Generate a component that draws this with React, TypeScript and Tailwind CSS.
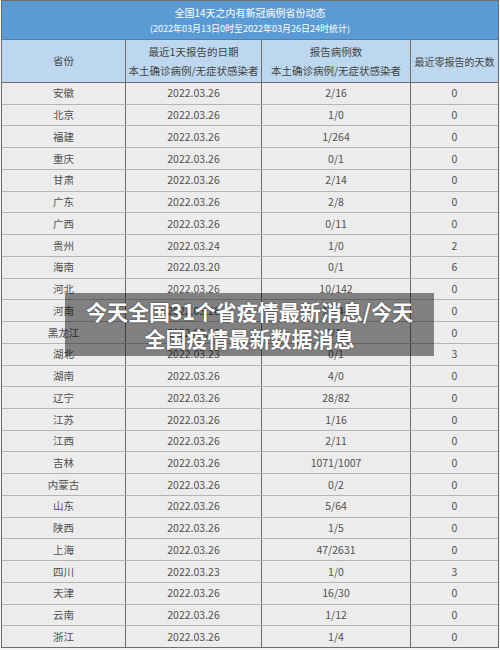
import React from "react";

const rows: [string, string, string, string][] = [
  ["安徽", "2022.03.26", "2/16", "0"],
  ["北京", "2022.03.26", "1/0", "0"],
  ["福建", "2022.03.26", "1/264", "0"],
  ["重庆", "2022.03.26", "0/1", "0"],
  ["甘肃", "2022.03.26", "2/14", "0"],
  ["广东", "2022.03.26", "2/8", "0"],
  ["广西", "2022.03.26", "0/11", "0"],
  ["贵州", "2022.03.24", "1/0", "2"],
  ["海南", "2022.03.20", "0/1", "6"],
  ["河北", "2022.03.26", "10/142", "0"],
  ["河南", "2022.03.26", "14/44", "0"],
  ["黑龙江", "2022.03.26", "0/13", "0"],
  ["湖北", "2022.03.23", "0/1", "3"],
  ["湖南", "2022.03.26", "4/0", "0"],
  ["辽宁", "2022.03.26", "28/82", "0"],
  ["江苏", "2022.03.26", "1/16", "0"],
  ["江西", "2022.03.26", "2/11", "0"],
  ["吉林", "2022.03.26", "1071/1007", "0"],
  ["内蒙古", "2022.03.26", "0/2", "0"],
  ["山东", "2022.03.26", "5/64", "0"],
  ["陕西", "2022.03.26", "1/5", "0"],
  ["上海", "2022.03.26", "47/2631", "0"],
  ["四川", "2022.03.23", "1/0", "3"],
  ["天津", "2022.03.26", "16/30", "0"],
  ["云南", "2022.03.26", "1/12", "0"],
  ["浙江", "2022.03.26", "1/4", "0"],
];

const font = { fontFamily: '"Noto Sans CJK SC", "Noto Sans", sans-serif' };

export default function App() {
  return (
    <div
      className="relative w-[500px] h-[650px] bg-[#f4f4f4] overflow-hidden text-[#505050]"
      style={font}
    >
      <div className="absolute inset-0 flex flex-col px-[1px] pb-[2px]">
        <div className="border border-[#6f6f6f] flex flex-col h-full bg-[#ececec]">
          {/* Banner */}
          <div className="h-[39px] bg-[#5b9bd5] text-white flex flex-col items-center justify-center border-b border-[#4a7fb0] shrink-0">
            <div className="text-[10px] leading-[16px]">全国14天之内有新冠病例省份动态</div>
            <div className="text-[9px] leading-[15px]">(2022年03月13日0时至2022年03月26日24时统计)</div>
          </div>
          {/* Header */}
          <div className="h-[43px] bg-[#bdd7ee] flex border-b border-[#6f6f6f] shrink-0 text-[10.5px] text-[#444]">
            <div className="w-[124px] flex items-center justify-center border-r border-[#6f6f6f]">省份</div>
            <div className="w-[136px] flex flex-col items-center justify-center border-r border-[#6f6f6f] leading-[19px]">
              <div>最近1天报告的日期</div>
              <div>本土确诊病例/无症状感染者</div>
            </div>
            <div className="w-[149px] flex flex-col items-center justify-center border-r border-[#6f6f6f] leading-[19px]">
              <div>报告病例数</div>
              <div>本土确诊病例/无症状感染者</div>
            </div>
            <div className="flex-1 flex items-center justify-center text-[10px] whitespace-nowrap">最近零报告的天数</div>
          </div>
          {/* Rows */}
          <div className="flex-1 flex flex-col text-[10.5px]">
            {rows.map((r, i) => (
              <div
                key={i}
                className={`flex-1 flex ${i < rows.length - 1 ? "border-b border-[#b4b4b4]" : ""}`}
              >
                <div className="w-[124px] flex items-center justify-center border-r border-[#6f6f6f]">{r[0]}</div>
                <div className="w-[136px] flex items-center justify-center border-r border-[#6f6f6f]">{r[1]}</div>
                <div className="w-[149px] flex items-center justify-center border-r border-[#6f6f6f]">{r[2]}</div>
                <div className="flex-1 flex items-center justify-center">{r[3]}</div>
              </div>
            ))}
          </div>
        </div>
      </div>
      {/* Overlay caption */}
      <div className="absolute left-[65px] top-[293px] w-[369px] h-[63px] bg-black/45 flex flex-col items-center justify-center text-white font-bold text-[21px] leading-[27px] whitespace-nowrap [text-shadow:0_0_2px_rgba(0,0,0,0.6)]">
        <div>今天全国31个省疫情最新消息/今天</div>
        <div>全国疫情最新数据消息</div>
      </div>
    </div>
  );
}
